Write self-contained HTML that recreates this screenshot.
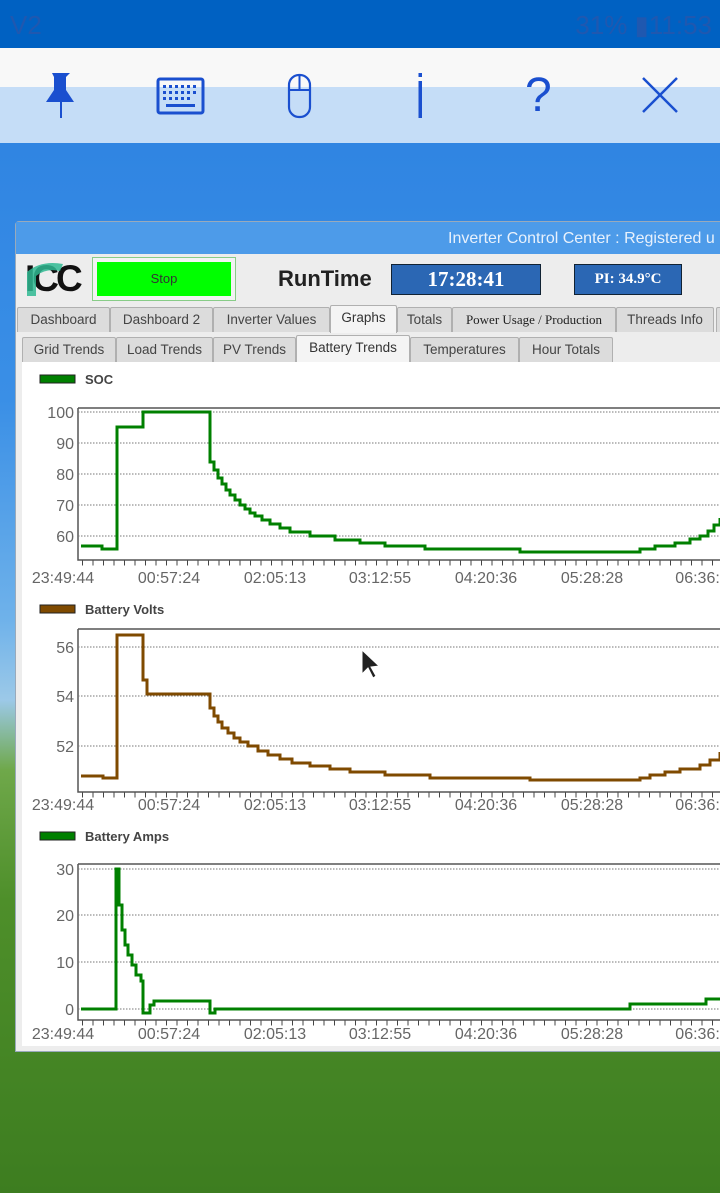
<!DOCTYPE html>
<html><head><meta charset="utf-8"><style>
*{margin:0;padding:0;box-sizing:border-box}
body{width:720px;height:1193px;overflow:hidden;position:relative;font-family:"Liberation Sans",sans-serif;
background:linear-gradient(180deg,#2a7fe0 0px,#3a8fe6 400px,#6fb2ea 620px,#9cc9e8 700px,#6fa84a 770px,#4e8f2a 900px,#3d7d20 1193px);}
.abs{position:absolute}
.tab{position:absolute;height:25px;border:1px solid #b0b0b0;border-bottom:none;background:#dcdcdc;font-size:13.5px;color:#444;text-align:center;line-height:24px;border-radius:2px 2px 0 0;white-space:nowrap;overflow:hidden}
.sel{background:#f4f4f4;color:#333}
</style></head><body>
<div class="abs" style="left:0;top:0;width:720px;height:48px;background:#0061c2"></div>
<div class="abs" style="left:0;top:48px;width:720px;height:39px;background:#f8f8f8"></div>
<div class="abs" style="left:0;top:87px;width:720px;height:56px;background:#c5ddf7"></div>
<svg class="abs" style="left:0;top:0" width="720" height="143" fill="#1a4fcf" stroke="#1a4fcf">
<path d="M52 73h18l-4 4v13l8 12H46l8-12V77z" stroke="none"/><line x1="61" y1="100" x2="61" y2="118" stroke-width="2"/>
<rect x="158" y="79" width="45" height="34" rx="2" fill="none" stroke-width="3"/>
<g stroke="none"><rect x="163" y="85" width="3" height="3"/><rect x="169" y="85" width="3" height="3"/><rect x="175" y="85" width="3" height="3"/><rect x="181" y="85" width="3" height="3"/><rect x="187" y="85" width="3" height="3"/><rect x="193" y="85" width="3" height="3"/>
<rect x="163" y="91" width="3" height="3"/><rect x="169" y="91" width="3" height="3"/><rect x="175" y="91" width="3" height="3"/><rect x="181" y="91" width="3" height="3"/><rect x="187" y="91" width="3" height="3"/><rect x="193" y="91" width="3" height="3"/>
<rect x="163" y="97" width="3" height="3"/><rect x="169" y="97" width="3" height="3"/><rect x="175" y="97" width="3" height="3"/><rect x="181" y="97" width="3" height="3"/><rect x="187" y="97" width="3" height="3"/>
<rect x="166" y="104" width="29" height="3"/></g>
<rect x="289" y="75" width="21" height="42" rx="10" fill="none" stroke-width="2.2"/>
<line x1="299.5" y1="75" x2="299.5" y2="90" stroke-width="2"/><line x1="289" y1="90" x2="310" y2="90" stroke-width="2"/>
<rect x="418.5" y="73" width="3.5" height="4" stroke="none"/><rect x="418.5" y="81" width="3.5" height="37" stroke="none"/>
<g stroke-width="2.5"><line x1="643" y1="78" x2="677" y2="112"/><line x1="677" y1="78" x2="643" y2="112"/></g>
</svg>
<div class="abs" style="left:525px;top:68px;font-size:48px;color:#1a4fcf;line-height:56px">?</div>
<div class="abs" style="left:450px;top:0;width:270px;height:48px;color:#1f58b0;font-size:26px;line-height:50px;text-align:right;padding-right:8px">31% ▮11:53</div>
<div class="abs" style="left:10px;top:0;height:48px;color:#1f58b0;font-size:26px;line-height:50px">V2</div>

<!-- window -->
<div class="abs" style="left:15px;top:221px;width:710px;height:831px;background:#ededed;border:1px solid #9ab;border-radius:4px 0 0 0">
<div class="abs" style="left:0;top:0;width:710px;height:32px;background:#4d9be9;color:#e8f1fc;font-size:16px;line-height:34px;padding-left:432px;white-space:nowrap;overflow:hidden">Inverter Control Center : Registered u</div>
</div>
<div class="abs" style="left:25px;top:258px;font-size:37px;font-weight:bold;color:#111;letter-spacing:-3px;font-family:'Liberation Sans Narrow','Liberation Sans',sans-serif">ICC</div>
<svg class="abs" style="left:24px;top:258px" width="54" height="40"><path d="M3 14q14-12 36-8l-3 7q-14-3-24 5v20H3z" fill="#2fb892" opacity="0.85"/></svg>
<div class="abs" style="left:92px;top:257px;width:144px;height:44px;border:1px solid #8c8;background:#f3f3f3;padding:4px"><div style="background:#00ff00;width:100%;height:100%;font-size:13px;color:#333;text-align:center;line-height:34px">Stop</div></div>
<div class="abs" style="left:278px;top:266px;font-size:22px;font-weight:bold;color:#222">RunTime</div>
<div class="abs" style="left:391px;top:264px;width:150px;height:31px;background:#2b67b4;border:1px solid #123;color:#fff;font-family:'Liberation Serif',serif;font-size:21px;font-weight:bold;text-align:center;line-height:29px">17:28:41</div>
<div class="abs" style="left:574px;top:264px;width:108px;height:31px;background:#2b67b4;border:1px solid #123;color:#fff;font-family:'Liberation Serif',serif;font-size:15px;font-weight:bold;text-align:center;line-height:29px">PI: 34.9°C</div>

<div class="tab" style="left:17px;top:307px;width:93px">Dashboard</div>
<div class="tab" style="left:110px;top:307px;width:103px">Dashboard 2</div>
<div class="tab" style="left:213px;top:307px;width:117px">Inverter Values</div>
<div class="tab sel" style="left:330px;top:305px;width:67px;height:28px">Graphs</div>
<div class="tab" style="left:397px;top:307px;width:55px">Totals</div>
<div class="tab" style="left:452px;top:307px;width:164px;font-family:'Liberation Serif',serif;font-size:13px;color:#222">Power Usage / Production</div>
<div class="tab" style="left:616px;top:307px;width:98px">Threads Info</div>
<div class="tab" style="left:716px;top:307px;width:10px"></div>
<div class="tab" style="left:22px;top:337px;width:94px">Grid Trends</div>
<div class="tab" style="left:116px;top:337px;width:97px">Load Trends</div>
<div class="tab" style="left:213px;top:337px;width:83px">PV Trends</div>
<div class="tab sel" style="left:296px;top:335px;width:114px;height:28px">Battery Trends</div>
<div class="tab" style="left:410px;top:337px;width:109px">Temperatures</div>
<div class="tab" style="left:519px;top:337px;width:94px">Hour Totals</div>

<svg class="abs" style="left:22px;top:362px" width="698" height="684" viewBox="22 362 698 684" font-family="Liberation Sans,sans-serif">
<rect x="22" y="362" width="700" height="684" fill="#fff"/>
<g font-size="13" font-weight="bold" fill="#444">
<rect x="40" y="375" width="35" height="8" fill="#008000" stroke="#222"/><text x="85" y="384">SOC</text>
<rect x="40" y="605" width="35" height="8" fill="#7f4a00" stroke="#222"/><text x="85" y="614">Battery Volts</text>
<rect x="40" y="832" width="35" height="8" fill="#008000" stroke="#222"/><text x="85" y="841">Battery Amps</text>
</g>
<g fill="none" stroke="#555" stroke-width="1.5"><path d="M78 408H722M78 408V560H722"/><path d="M78 629H722M78 629V792H722"/><path d="M78 864H722M78 864V1020H722"/></g>
<g stroke="#777" stroke-dasharray="1.5 1.5"><path d="M78 412H720M78 443H720M78 474H720M78 505H720M78 536H720M78 647H720M78 696H720M78 746H720M78 869H720M78 915H720M78 962H720M78 1009H720"/></g>
<g stroke="#444" stroke-dasharray="1 9.5" stroke-dashoffset="-4"><path d="M78 563H720M78 795H720M78 1023H720" stroke-width="5"/></g>
<g font-size="16" fill="#666" text-anchor="end">
<text x="74" y="418">100</text><text x="74" y="449">90</text><text x="74" y="480">80</text><text x="74" y="511">70</text><text x="74" y="542">60</text>
<text x="74" y="653">56</text><text x="74" y="702">54</text><text x="74" y="752">52</text>
<text x="74" y="875">30</text><text x="74" y="921">20</text><text x="74" y="968">10</text><text x="74" y="1015">0</text>
</g>
<g font-size="16" fill="#666" text-anchor="middle">
<text x="63" y="583">23:49:44</text><text x="169" y="583">00:57:24</text><text x="275" y="583">02:05:13</text><text x="380" y="583">03:12:55</text><text x="486" y="583">04:20:36</text><text x="592" y="583">05:28:28</text><text x="702" y="583">06:36:3</text>
<text x="63" y="810">23:49:44</text><text x="169" y="810">00:57:24</text><text x="275" y="810">02:05:13</text><text x="380" y="810">03:12:55</text><text x="486" y="810">04:20:36</text><text x="592" y="810">05:28:28</text><text x="702" y="810">06:36:3</text>
<text x="63" y="1039">23:49:44</text><text x="169" y="1039">00:57:24</text><text x="275" y="1039">02:05:13</text><text x="380" y="1039">03:12:55</text><text x="486" y="1039">04:20:36</text><text x="592" y="1039">05:28:28</text><text x="702" y="1039">06:36:3</text>
</g>
<g fill="none" stroke-width="3">
<path stroke="#008000" d="M81 546H102V549H117V490V427H143V412H210V462H214V470H218V478H222V484H226V490H230V495H235V500H240V505H245V509H250V513H255V516H262V520H270V524H280V528H290V532H310V536H335V540H360V543H385V546H425V549H520V552H640V549H655V546H675V543H690V539H700V536H708V531H714V525H720V518"/>
<path stroke="#7f4a00" d="M81 776H103V778H117V740V635H143V680H147V694H210V708H214V716H218V722H222V728H228V733H234V738H240V742H248V746H258V751H268V755H280V759H292V763H310V766H330V769H350V772H385V775H430V778H530V780H640V778H650V775H665V772H680V769H700V765H710V760H720V752"/>
<path stroke="#008000" d="M81 1009H116V869H119V905H122V930H125V945H128V955H132V965H136V975H141V981H143V1013H150V1005H154V1001H210V1013H215V1009H630V1004H706V999H720"/>
</g>
<path d="M362 650l0 24 6-6 5 10 3-2-5-9 8-1z" fill="#222" stroke="#fff" stroke-width="1"/>
</svg>
</body></html>
